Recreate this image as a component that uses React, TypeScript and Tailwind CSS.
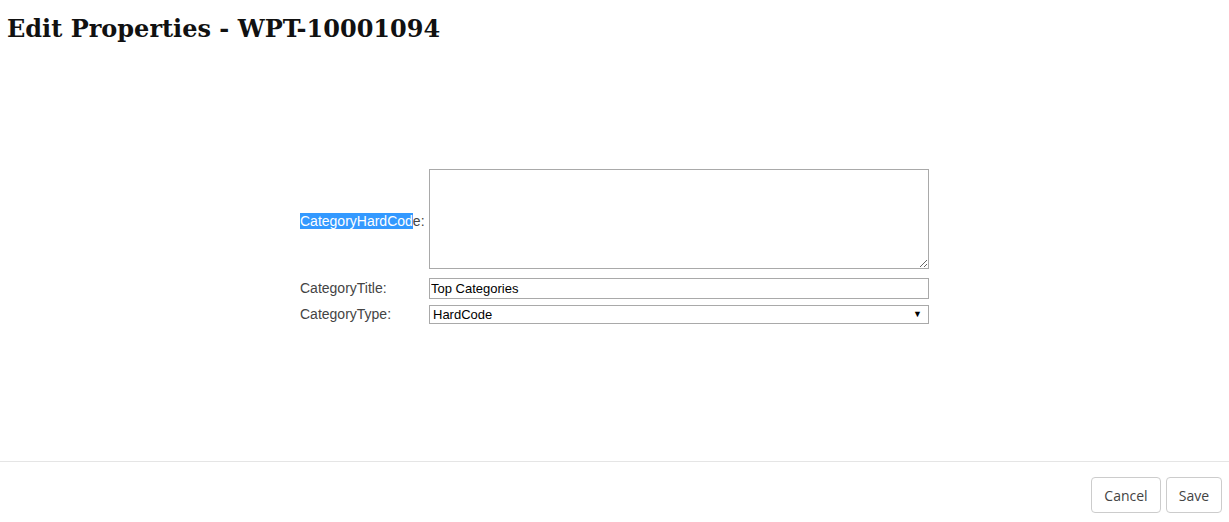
import React from "react";

export default function App() {
    return (
        <div className="h-[522px] w-full flex flex-col bg-white text-[#333]">
            {/* Header */}
            <h1 className="pl-[7px] pt-[13px] text-[24px] leading-[32px] font-bold text-[#111] font-['DejaVu_Serif',serif]">
                Edit Properties - WPT-10001094
            </h1>

            {/* Form body */}
            <div className="flex-1 flex justify-center pt-[124px]">
                <div className="w-[629px] font-['Liberation_Sans',Arial,sans-serif] text-[14px]">
                    <div className="flex items-center">
                        <div className="w-[129px] pt-[4px]">
                            <span className="bg-[#3399ff] text-white">CategoryHardCod</span>
                            <span className="text-[#444]">e:</span>
                        </div>
                        <textarea className="w-[500px] h-[100px] border border-[#a9a9a9] bg-white outline-none resize" />
                    </div>

                    <div className="flex items-center mt-[9px]">
                        <div className="w-[129px] text-[#444]">CategoryTitle:</div>
                        <input
                            className="w-[500px] h-[21px] border border-[#a9a9a9] px-[1px] text-[13px] text-black outline-none"
                            defaultValue="Top Categories"
                        />
                    </div>

                    <div className="flex items-center mt-[5px]">
                        <div className="w-[129px] text-[#444]">CategoryType:</div>
                        <div className="w-[500px] h-[19px] border border-[#a9a9a9] flex items-center justify-between pl-[3px] pr-[6px] text-[13px] text-black">
                            <span>HardCode</span>
                            <span className="text-[9px] leading-none">▼</span>
                        </div>
                    </div>
                </div>
            </div>

            {/* Footer */}
            <div className="border-t border-[#e5e5e5] h-[61px] flex justify-end items-start gap-[5px] pt-[15px] pr-[7px] font-['Open_Sans',sans-serif] text-[14px]">
                <button className="h-[36px] w-[70px] rounded border border-[#cccccc] bg-white text-[#444]">Cancel</button>
                <button className="h-[36px] w-[56px] rounded border border-[#cccccc] bg-white text-[#444]">Save</button>
            </div>
        </div>
    );
}
